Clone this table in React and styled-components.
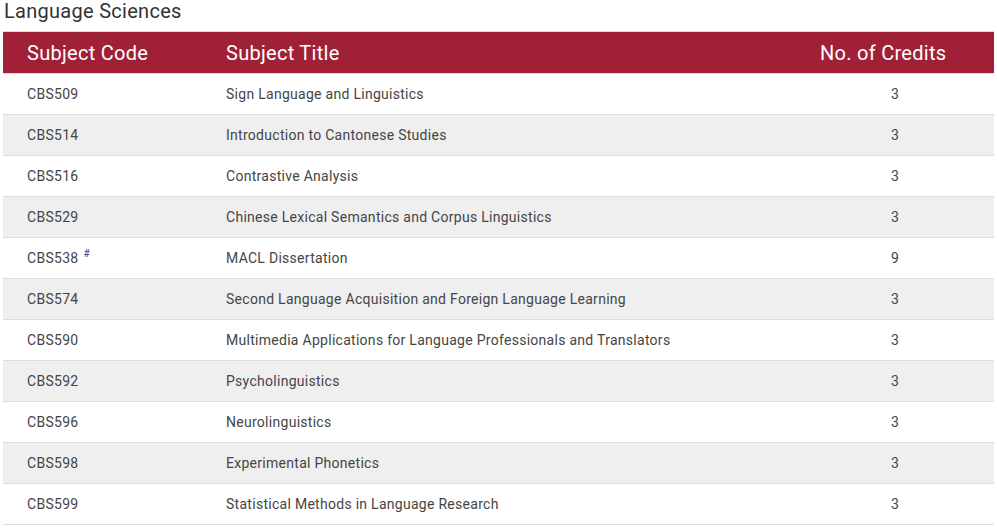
import styled, { createGlobalStyle } from "styled-components";

const GlobalStyle = createGlobalStyle`
  body {
    margin: 0;
    background: #fff;
    font-family: Roboto, "Liberation Sans", Arial, sans-serif;
    letter-spacing: 0.28px;
  }
`;

const Page = styled.div`
  padding: 0 3px;
  width: 991px;
`;

const Heading = styled.h3`
  margin: 0 0 9px 1px;
  font-size: 20px;
  line-height: 22px;
  font-weight: 400;
  color: #333;
`;

const Row = styled.div`
  display: grid;
  grid-template-columns: 199px 594px 198px;
  height: ${({ head }) => (head ? "41px" : "40px")};
  align-items: center;
  background: ${({ head, shaded }) =>
    head ? "#a02137" : shaded ? "#efefef" : "#fff"};
  border-top: ${({ head }) => (head ? "1px solid #ddd" : "0")};
  border-bottom: 1px solid #ddd;
`;

const HeadCell = styled.div`
  padding-left: 24px;
  font-size: 20px;
  color: #fff;
`;

const Cell = styled.div`
  padding-left: ${({ center }) => (center ? "0" : "24px")};
  text-align: ${({ center }) => (center ? "center" : "left")};
  font-size: 14px;
  color: #454545;
`;

const Mark = styled.sup`
  font-size: 10px;
  margin-left: 5px;
  vertical-align: 6px;
  line-height: 0;
`;

const subjects = [
  ["CBS509", "Sign Language and Linguistics", 3],
  ["CBS514", "Introduction to Cantonese Studies", 3],
  ["CBS516", "Contrastive Analysis", 3],
  ["CBS529", "Chinese Lexical Semantics and Corpus Linguistics", 3],
  ["CBS538", "MACL Dissertation", 9, true],
  ["CBS574", "Second Language Acquisition and Foreign Language Learning", 3],
  ["CBS590", "Multimedia Applications for Language Professionals and Translators", 3],
  ["CBS592", "Psycholinguistics", 3],
  ["CBS596", "Neurolinguistics", 3],
  ["CBS598", "Experimental Phonetics", 3],
  ["CBS599", "Statistical Methods in Language Research", 3],
];

export default function App() {
  return (
    <Page>
      <GlobalStyle />
      <Heading>Language Sciences</Heading>
      <Row head>
        <HeadCell>Subject Code</HeadCell>
        <HeadCell>Subject Title</HeadCell>
        <HeadCell>No. of Credits</HeadCell>
      </Row>
      {subjects.map(([code, title, credits, marked], i) => (
        <Row key={code} shaded={i % 2 === 1}>
          <Cell>
            {code}
            {marked && <Mark>#</Mark>}
          </Cell>
          <Cell>{title}</Cell>
          <Cell center>{credits}</Cell>
        </Row>
      ))}
    </Page>
  );
}
